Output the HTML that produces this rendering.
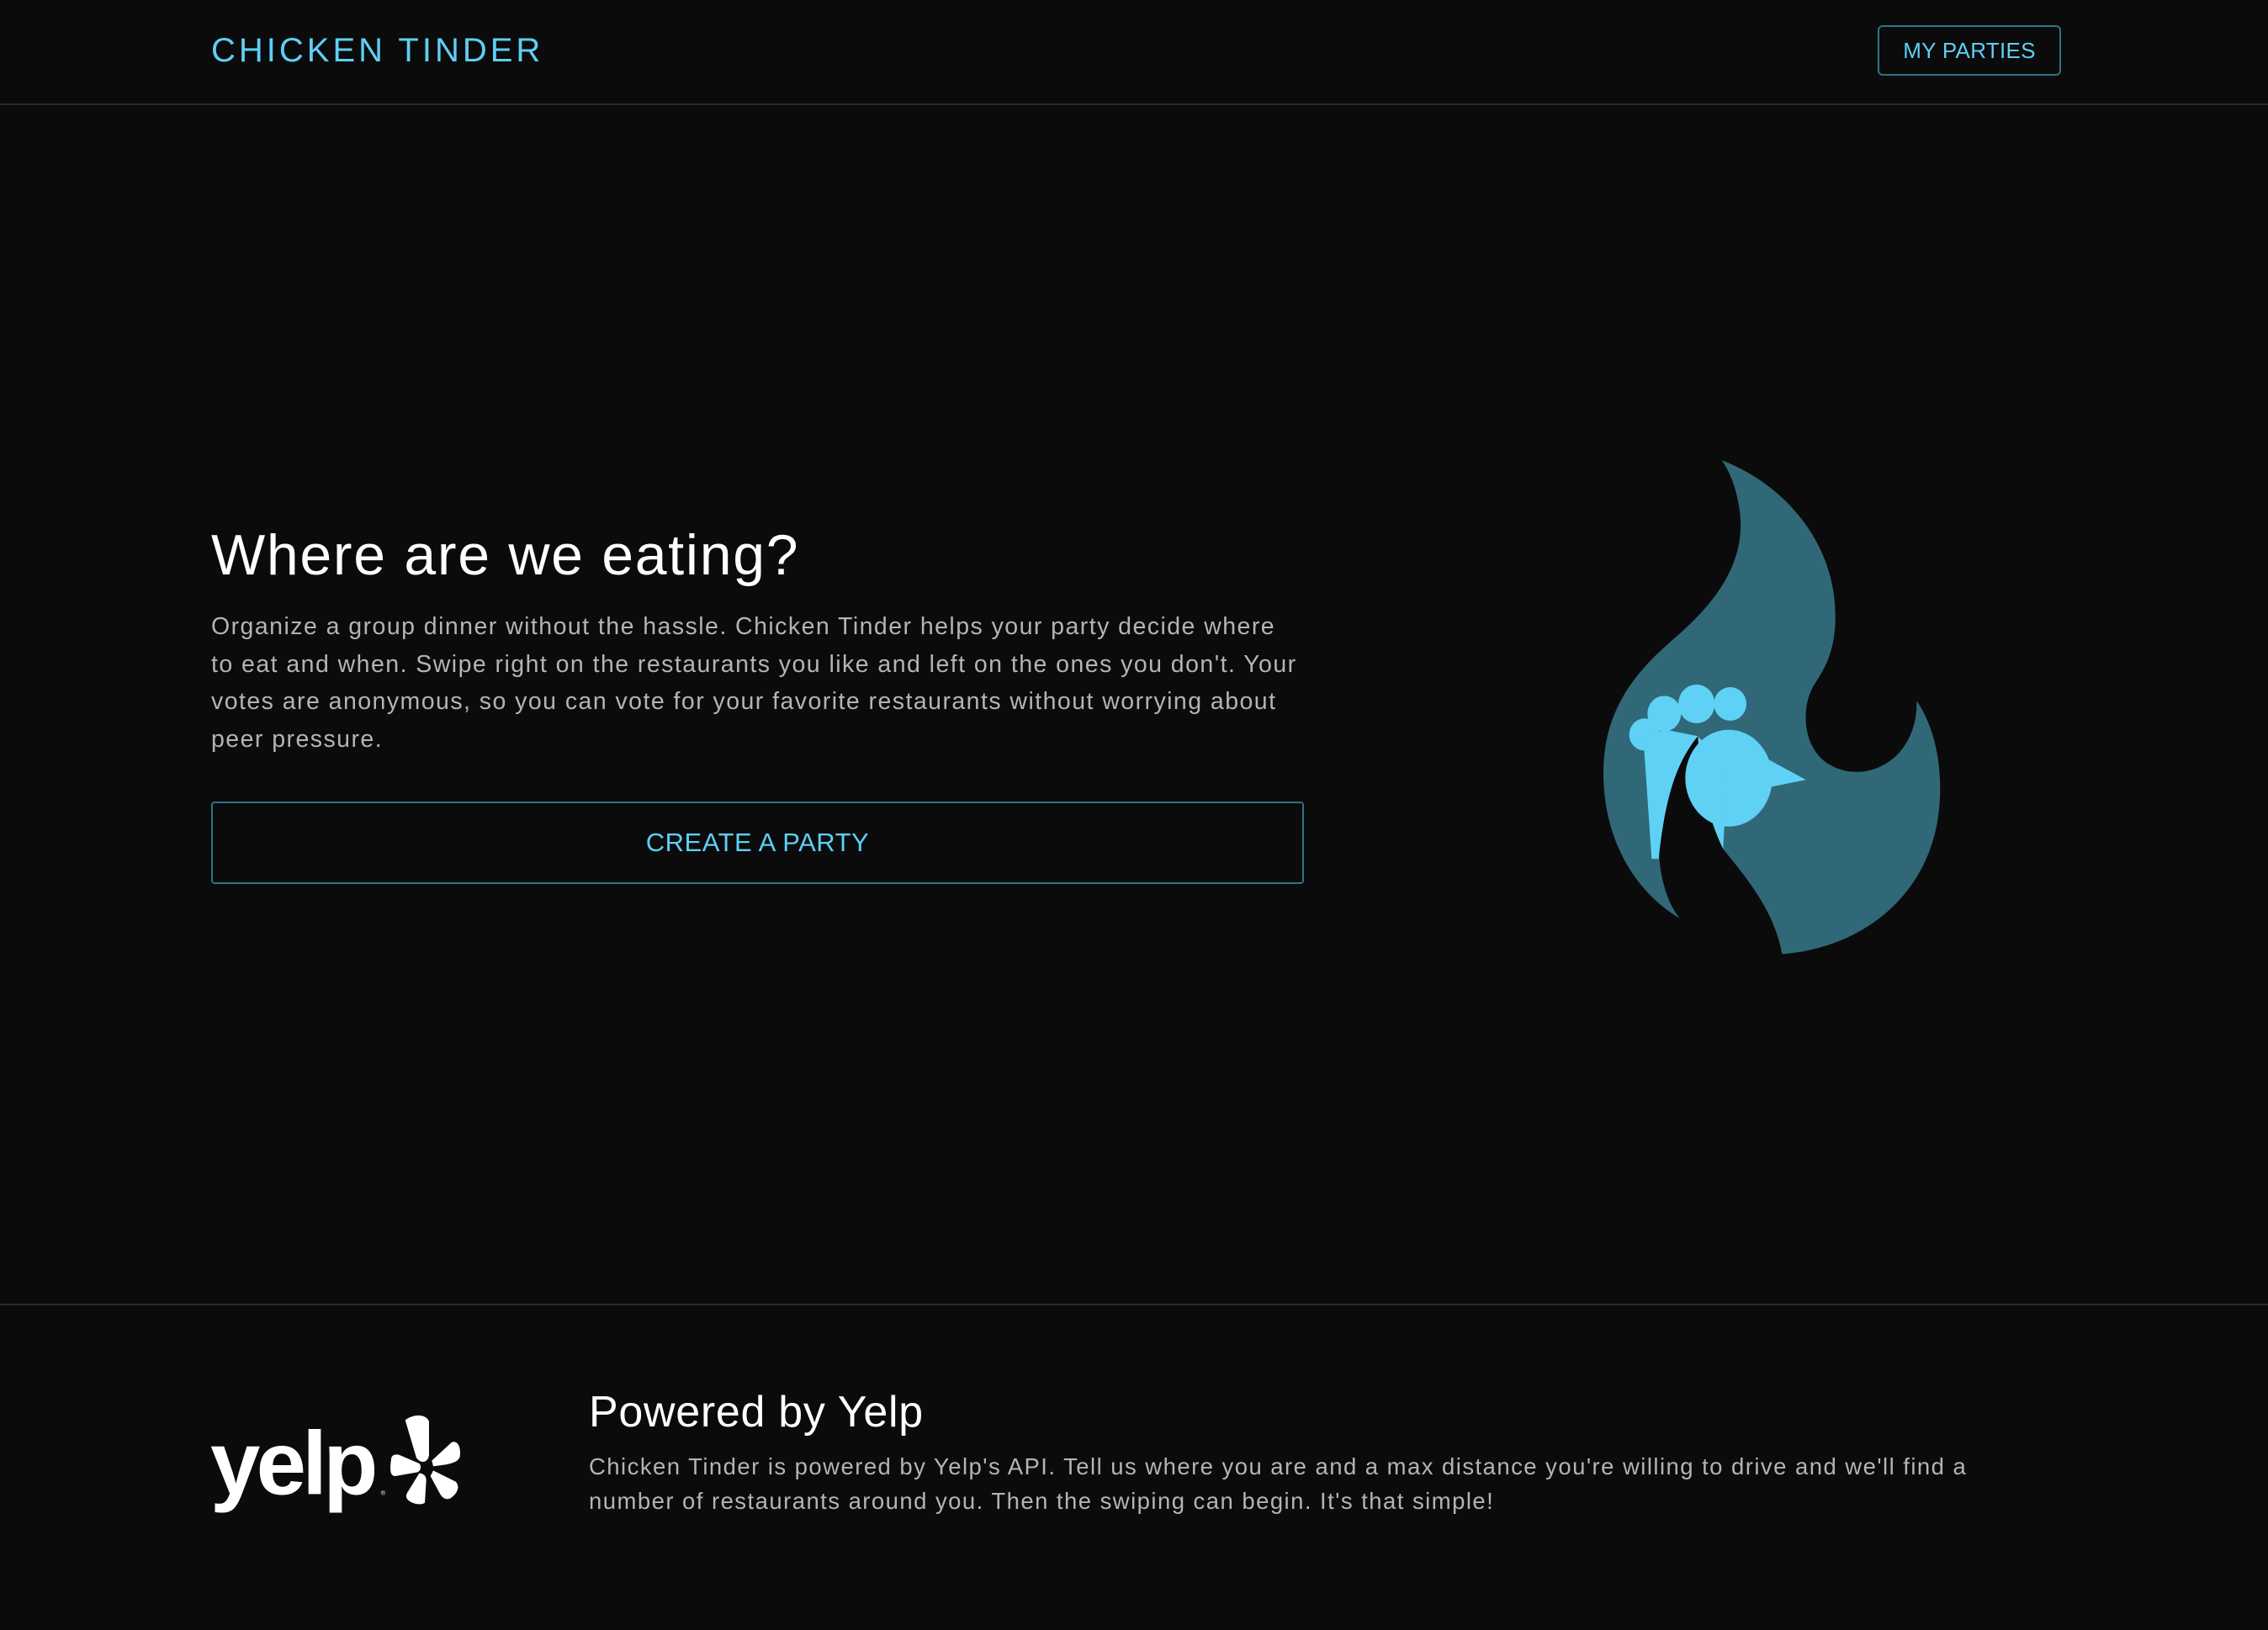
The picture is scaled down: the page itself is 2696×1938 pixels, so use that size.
<!DOCTYPE html>
<html><head><meta charset="utf-8"><style>
*{margin:0;padding:0;box-sizing:border-box}
html,body{width:2696px;height:1938px;background:#0b0b0b;overflow:hidden;font-family:"Liberation Sans",sans-serif}
.hdr{position:absolute;left:0;top:0;width:2696px;height:125px;border-bottom:2px solid #2a2a2a}
.title{position:absolute;left:251px;top:36px;font-size:40px;letter-spacing:4px;color:#5ecff5;font-weight:300;line-height:48px;white-space:nowrap}
.mp{position:absolute;left:2232px;top:30px;width:218px;height:60px;border:2px solid #2f7287;border-radius:6px;color:#5ecff5;font-size:26px;text-align:center;line-height:56px;letter-spacing:0.3px}
h1{position:absolute;left:251px;top:620px;font-size:68px;font-weight:normal;color:#fff;white-space:nowrap;line-height:80px;letter-spacing:1.7px}
.p{position:absolute;left:251px;top:723px;width:1400px;font-size:28.5px;line-height:44.6px;color:#b4b4b4;letter-spacing:1.45px;white-space:nowrap}
.btn{position:absolute;left:251px;top:953px;width:1299px;height:98px;border:2px solid #2f7287;border-radius:4px;color:#5ecff5;font-size:31px;text-align:center;line-height:94px;letter-spacing:0.5px}
.fl{position:absolute;left:0;top:1550px;width:2696px;border-top:2px solid #2a2a2a}
h2{position:absolute;left:700px;top:1647px;font-size:52px;font-weight:normal;color:#fff;white-space:nowrap;line-height:64px;letter-spacing:0.7px}
.fp{position:absolute;left:700px;top:1723px;width:1700px;font-size:27.5px;line-height:41px;color:#b4b4b4;letter-spacing:1.45px;white-space:nowrap}
</style></head><body>
<div class="hdr"><div class="title">CHICKEN TINDER</div><div class="mp">MY PARTIES</div></div>
<h1>Where are we eating?</h1>
<div class="p">Organize a group dinner without the hassle. Chicken Tinder helps your party decide where<br>to eat and when. Swipe right on the restaurants you like and left on the ones you don't. Your<br>votes are anonymous, so you can vote for your favorite restaurants without worrying about<br>peer pressure.</div>
<div class="btn">CREATE A PARTY</div>
<svg style="position:absolute;left:1880px;top:530px" width="460" height="610" viewBox="0 0 1380 1590" preserveAspectRatio="none">
<path fill="#306878" d="M500,45 C700,110 900,280 905,520 C908,640 860,700 830,740 C780,810 790,930 870,980 C1000,1060 1200,980 1195,790 C1280,900 1290,1050 1270,1160 C1220,1420 970,1560 715,1575 C690,1450 600,1350 505,1250 C460,1100 430,1000 415,900 C330,980 270,1100 275,1250 C280,1350 310,1420 350,1465 C170,1370 80,1200 78,1020 C75,800 220,680 340,590 C470,490 600,360 560,180 C545,110 520,70 500,45Z"/>
<g fill="#5fd1f5">
<ellipse cx="295" cy="830" rx="60" ry="55"/><ellipse cx="410" cy="800" rx="65" ry="60"/><ellipse cx="530" cy="800" rx="58" ry="52"/><ellipse cx="225" cy="895" rx="55" ry="50"/>
<ellipse cx="525" cy="1030" rx="155" ry="150"/>
<path d="M640,960 L800,1035 L660,1060Z"/>
<path d="M220,900 L300,880 L415,900 C340,980 300,1080 275,1280 L250,1280 Z"/>
<path d="M415,900 L520,1000 L505,1250 C450,1150 425,1050 415,900Z"/>
</g></svg>
<div class="fl"></div>
<svg style="position:absolute;left:230px;top:1640px" width="350" height="180" viewBox="0 0 1050 540">
<text x="60" y="410" font-family="Liberation Sans" font-weight="bold" font-size="320" fill="#fff" letter-spacing="-14">yelp</text>
<g fill="#fff">
<path d="M755,145 C790,120 830,125 840,150 L840,270 C835,300 810,300 795,280 Z"/>
<path d="M850,290 L920,225 C940,215 955,240 950,275 C945,300 900,305 855,310 Z"/>
<path d="M705,285 C705,270 720,265 735,270 L805,300 C815,310 810,330 795,332 L720,345 C700,345 700,320 705,285Z"/>
<path d="M855,325 L935,365 C950,380 945,405 915,425 C900,430 890,425 880,410 L845,345 Z"/>
<path d="M805,335 C820,335 830,345 830,360 L825,440 C815,450 780,445 765,430 C755,420 758,410 765,400 Z"/>
</g>
<text x="668" y="413" font-family="Liberation Sans" font-size="22" fill="#fff">®</text>
</svg>
<h2>Powered by Yelp</h2>
<div class="fp">Chicken Tinder is powered by Yelp's API. Tell us where you are and a max distance you're willing to drive and we'll find a<br>number of restaurants around you. Then the swiping can begin. It's that simple!</div>
</body></html>
